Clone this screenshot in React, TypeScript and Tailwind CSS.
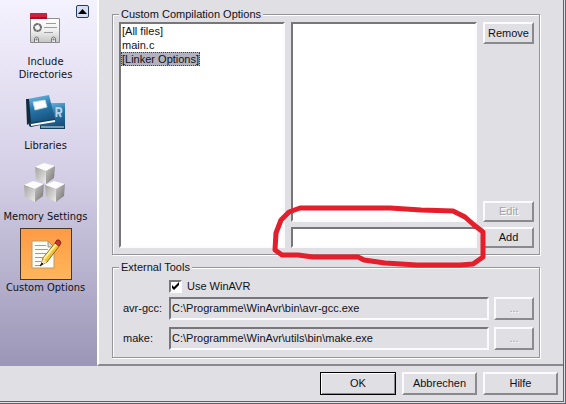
import type { ReactNode } from "react";

const SUNKEN =
  "rounded-none border-2 border-t-[#77767a] border-l-[#77767a] border-r-[#fbfbfd] border-b-[#fbfbfd]";
const RAISED =
  "rounded-none border-2 border-t-[#fbfbfd] border-l-[#fbfbfd] border-r-[#8a898e] border-b-[#8a898e] bg-[#e0dfe4]";
const GROUP =
  "mx-3 border border-[#96959a] pl-[6px] pr-[5px] shadow-[1px_1px_0_#fff,inset_1px_1px_0_#fff]";
const DISABLED = "text-[#a3a2a8] [text-shadow:1px_1px_0_#fff]";

function PageIcon() {
  return (
    <svg width="32" height="32" viewBox="0 0 32 32" aria-hidden="true">
      <defs>
        <linearGradient id="card" x1="0" y1="0" x2="0" y2="1">
          <stop offset="0" stopColor="#ffffff" />
          <stop offset="0.500" stopColor="#f0f0f0" />
          <stop offset="1" stopColor="#c4c4c4" />
        </linearGradient>
      </defs>
      <path d="M1.500 6.500h29v24h-29z" fill="url(#card)" stroke="#8d8d90" />
      <path d="M1 1h17v6H1z" fill="#d0203a" />
      <path d="M1 5h17v2H1z" fill="#a80f26" />
      <circle cx="8.500" cy="15.500" r="3.500" fill="none" stroke="#707074" strokeWidth="2" strokeDasharray="3.500 2" strokeDashoffset="-1" />
      <path d="M8.500 11v2M8.500 18v2M4 15.500h2M11 15.500h2" stroke="#707074" strokeWidth="2" />
      <path d="M17 11.500h10M15 15.500h13M15 20.500h9" stroke="#9c9ca0" />
      <path d="M5.500 30v-3a2 2 0 0 1 4 0v3M22.500 30v-3a2 2 0 0 1 4 0v3" fill="#e8e8e8" stroke="#77777a" />
      <circle cx="7.500" cy="27.500" r="1" fill="#77777a" />
      <circle cx="24.500" cy="27.500" r="1" fill="#77777a" />
    </svg>
  );
}

function BooksIcon() {
  return (
    <svg width="40" height="36" viewBox="0 0 40 36" aria-hidden="true">
      <defs>
        <linearGradient id="cover" x1="0" y1="0" x2="0.300" y2="1">
          <stop offset="0" stopColor="#7cc4ea" />
          <stop offset="0.500" stopColor="#2878ab" />
          <stop offset="1" stopColor="#17527f" />
        </linearGradient>
      </defs>
      <path d="M14 9h25v26H14z" fill="url(#cover)" />
      <path d="M14 32h25v3H14z" fill="#143e5e" />
      <path d="M15 33h23" stroke="#eef6fb" />
      <path d="M30.500 23v-9h2.500a2 2 0 0 1 0 5h-2.500m2.500 0 2 4" fill="none" stroke="#b5d2e5" strokeWidth="2" />
      <path d="M1 5 23 1l6 24-25 5z" fill="url(#cover)" />
      <path d="M0 5h3l2 23-4 3z" fill="#132b3e" />
      <path d="m3 29 26-4v3L5 33q-3-1-2-4z" fill="#0f3857" />
      <path d="m5 31 24-4" stroke="#f5f8fa" strokeWidth="2" />
      <path d="m7 8 12-2 2 7-12 3z" fill="#fff" stroke="#b9d9ea" />
    </svg>
  );
}

function CubesIcon() {
  return (
    <svg width="44" height="42" viewBox="0 0 44 42" aria-hidden="true">
      <defs>
        <linearGradient id="cubeLeft" x1="0" y1="0" x2="1" y2="1">
          <stop offset="0" stopColor="#a3a2a0" />
          <stop offset="1" stopColor="#ededeb" />
        </linearGradient>
        <linearGradient id="cubeRight" x1="0" y1="0" x2="1" y2="1">
          <stop offset="0" stopColor="#c8c7c6" />
          <stop offset="1" stopColor="#706f6e" />
        </linearGradient>
      </defs>
      {["translate(11 0)", "translate(0 18)", "translate(21 18)"].map((place) => (
        <g key={place} transform={place}>
          <path d="m1 5 9-4 11 3-9 5z" fill="#fcfcfc" />
          <path d="m1 5 11 4v13L2 17z" fill="url(#cubeLeft)" />
          <path d="m12 9 9-5-1 12-8 6z" fill="url(#cubeRight)" />
        </g>
      ))}
    </svg>
  );
}

function NoteIcon() {
  return (
    <svg width="34" height="34" viewBox="0 0 34 34" aria-hidden="true">
      <path d="M3 4h16l6 6v21H3z" fill="#fdfdf8" stroke="#c09a62" />
      <path d="M19 4v6h6z" fill="#d9d6cb" stroke="#9a9482" />
      <path d="M6 8.500h11M6 12.500h13M6 16.500h11M6 20.500h8M6 24.500h6M6 28.500h5" stroke="#9b9ca3" />
      <path d="m12 28 2-7L27 5l4 3-13 17z" fill="#f2c531" stroke="#8a6510" />
      <path d="m15 22 13-16" stroke="#fff0a0" strokeWidth="2" />
      <path d="m12 28 2-6 4 3z" fill="#f5e2bd" />
      <path d="m11 29 2-3 1 1z" fill="#222" stroke="#222" />
      <path d="m26 6 2-3q3-1 4 3l-2 3z" fill="#c9372e" stroke="#8b221c" />
    </svg>
  );
}

function NavItem({ icon, active, children }: { icon: ReactNode; active?: boolean; children: ReactNode }) {
  return (
    <button type="button" className="flex flex-col items-center gap-px text-center leading-[13px] whitespace-nowrap">
      <span
        className={
          active
            ? "flex size-[52px] items-center justify-center border border-[#4a3424] bg-linear-to-b from-[#ff9a45] to-[#ffb65c]"
            : "flex size-[52px] items-center justify-center"
        }
      >
        {icon}
      </span>
      <span>{children}</span>
    </button>
  );
}

function Sidebar() {
  return (
    <nav
      aria-label="Option pages"
      className="relative flex w-[97px] shrink-0 flex-col items-center gap-[5px] bg-linear-to-b from-[#f5f2ff] via-[#d2cde4] to-[#9b96b6] pt-[2px] pr-[6px] font-['DejaVu_Sans_Condensed','DejaVu_Sans',sans-serif]"
    >
      <button
        type="button"
        aria-label="Scroll up"
        className="absolute top-[5px] right-2 flex size-[13px] items-center justify-center rounded-xs border border-[#273c5c] bg-[#d5dff0]"
      >
        <svg width="9" height="5" viewBox="0 0 9 5" aria-hidden="true">
          <path d="M0 5 4.500 0 9 5z" fill="#000" />
        </svg>
      </button>
      <NavItem icon={<PageIcon />}>
        Include
        <br />
        Directories
      </NavItem>
      <NavItem icon={<BooksIcon />}>Libraries</NavItem>
      <NavItem icon={<CubesIcon />}>Memory Settings</NavItem>
      <NavItem icon={<NoteIcon />} active>
        Custom Options
      </NavItem>
    </nav>
  );
}

function CompilationOptions() {
  return (
    <fieldset className={`${GROUP} relative pb-[6px]`}>
      <legend className="bg-[#e0dfe4] px-[2px] leading-4">Custom Compilation Options</legend>
      <div className="grid grid-cols-[166fr_186fr_51px] gap-x-[6px]">
        <ul role="listbox" aria-label="Files" className={`${SUNKEN} bg-white leading-[14px]`}>
          <li role="option" aria-selected="false" className="px-px">[All files]</li>
          <li role="option" aria-selected="false" className="px-px">main.c</li>
          <li
            role="option"
            aria-selected="true"
            className="w-fit border border-dotted border-[#404048] bg-[#b2b1be] leading-3"
          >
            [Linker Options]
          </li>
        </ul>
        <div className="flex flex-col gap-[5px]">
          <ul role="listbox" aria-label="Options" className={`${SUNKEN} h-[200px] bg-white`} />
          <input aria-label="New option" className={`${SUNKEN} h-[21px] w-full bg-white px-px`} />
        </div>
        <div className="flex flex-col gap-[5px]">
          <button type="button" className={`${RAISED} h-[22px]`}>Remove</button>
          <button type="button" disabled className={`${RAISED} ${DISABLED} mt-auto h-[21px]`}>Edit</button>
          <button type="button" className={`${RAISED} h-[21px]`}>Add</button>
        </div>
      </div>
      <svg
        className="pointer-events-none absolute right-[49px] bottom-[-18px]"
        width="220"
        height="70"
        viewBox="270 202 220 70"
        aria-hidden="true"
      >
        <path
          d="M300 208H390L421 210 453 211 465 217 474 225 483 232V257L473 264 460 265H417L385 263 364 260 358 257H313L298 255H282L275 250 276 233 281 220 289 212Z"
          fill="none"
          stroke="#e41e2b"
          strokeWidth="5"
          strokeLinejoin="round"
        />
      </svg>
    </fieldset>
  );
}

function ToolPath({ id, label, path }: { id: string; label: string; path: string }) {
  return (
    <div className="flex items-center">
      <label htmlFor={id} className="w-[50px] shrink-0 pl-1">{label}</label>
      <input id={id} readOnly defaultValue={path} className={`${SUNKEN} h-[23px] min-w-0 flex-1 bg-[#e0dfe4] px-px pb-[2px]`} />
      <button
        type="button"
        disabled
        aria-label={`Browse for ${label}`}
        className={`${RAISED} ${DISABLED} ml-[5px] h-[23px] w-10`}
      >
        ...
      </button>
    </div>
  );
}

function ExternalTools() {
  return (
    <fieldset className={`${GROUP} mt-1 pb-[7px]`}>
      <legend className="bg-[#e0dfe4] px-[2px] leading-4">External Tools</legend>
      <div className="mt-1 mb-1 flex items-center pl-[50px]">
        <span className="relative flex">
          <input
            id="winavr"
            type="checkbox"
            defaultChecked
            className={`${SUNKEN} peer size-[13px] appearance-none bg-white`}
          />
          <svg
            className="pointer-events-none absolute inset-0 hidden peer-checked:block"
            width="13"
            height="13"
            viewBox="0 0 13 13"
            aria-hidden="true"
          >
            <path d="M3 5v3l2 2 5-5V2L5 7z" fill="#000" />
          </svg>
        </span>
        <label htmlFor="winavr" className="pl-[5px] leading-[14px]">Use WinAVR</label>
      </div>
      <div className="flex flex-col gap-[7px]">
        <ToolPath id="gcc" label="avr-gcc:" path="C:\Programme\WinAvr\bin\avr-gcc.exe" />
        <ToolPath id="make" label="make:" path="C:\Programme\WinAvr\utils\bin\make.exe" />
      </div>
    </fieldset>
  );
}

export default function App() {
  return (
    <div className="min-h-screen border-r-3 border-b-3 border-double border-[#626078] bg-[#e0dfe4] font-['Liberation_Sans',Arial,sans-serif] text-[11px] text-[#111118]">
      <div className="flex">
        <Sidebar />
        <main className="min-w-0 flex-1 border-b-2 border-l-2 border-b-[#89888e] border-l-white pt-[6px] pr-[11px] pb-[6px] pl-px">
          <CompilationOptions />
          <ExternalTools />
        </main>
      </div>
      <footer className="flex justify-end gap-[6px] pt-[6px] pr-[5px] pb-1">
        <button type="submit" className="h-[23px] w-[76px] border border-black bg-[#e0dfe4] shadow-[inset_1px_1px_0_#fff,inset_-1px_-1px_0_#8a898e]">
          OK
        </button>
        <button type="button" className={`${RAISED} h-[23px] w-[75px]`}>Abbrechen</button>
        <button type="button" className={`${RAISED} h-[23px] w-[75px]`}>Hilfe</button>
      </footer>
    </div>
  );
}
